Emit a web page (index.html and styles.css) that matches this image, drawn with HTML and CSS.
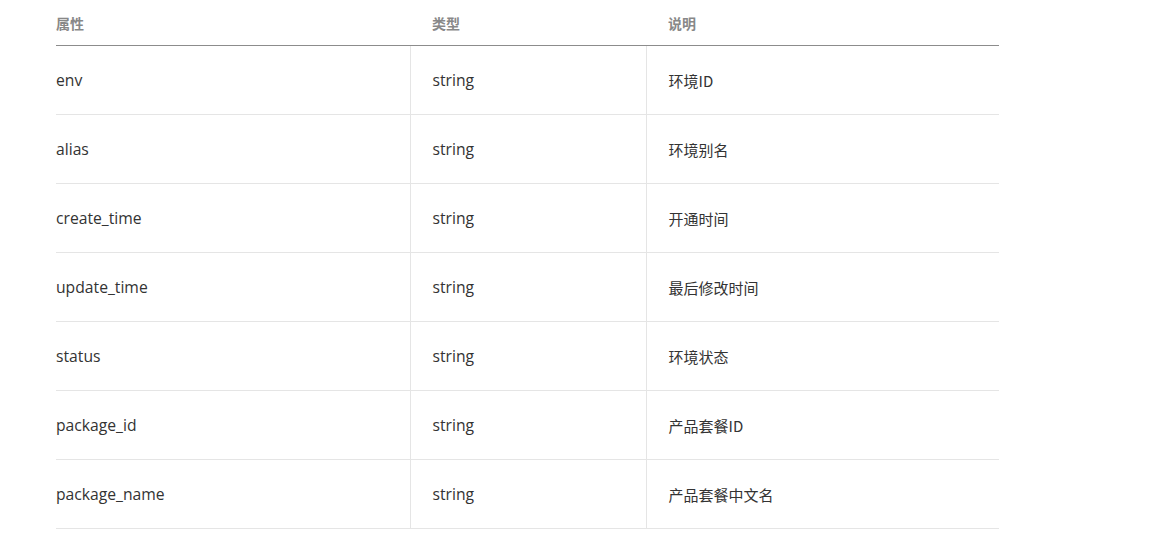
FILE: index.html
```html
<!DOCTYPE html>
<html lang="zh">
<head>
<meta charset="utf-8">
<link rel="stylesheet" href="styles.css">
</head>
<body>
<div class="wrap">
<table class="props">
  <thead>
    <tr><th class="c1">属性</th><th class="c2">类型</th><th class="c3">说明</th></tr>
  </thead>
  <tbody>
    <tr><td class="c1">env</td><td class="c2">string</td><td class="c3">环境ID</td></tr>
    <tr><td class="c1">alias</td><td class="c2">string</td><td class="c3">环境别名</td></tr>
    <tr><td class="c1">create_time</td><td class="c2">string</td><td class="c3">开通时间</td></tr>
    <tr><td class="c1">update_time</td><td class="c2">string</td><td class="c3">最后修改时间</td></tr>
    <tr><td class="c1">status</td><td class="c2">string</td><td class="c3">环境状态</td></tr>
    <tr><td class="c1">package_id</td><td class="c2">string</td><td class="c3">产品套餐ID</td></tr>
    <tr><td class="c1">package_name</td><td class="c2">string</td><td class="c3">产品套餐中文名</td></tr>
  </tbody>
</table>
</div>
</body>
</html>
```
FILE: styles.css
```css
html, body {
  margin: 0;
  padding: 0;
  background: #fff;
}
.wrap {
  padding-left: 56px;
}
.props {
  width: 943px;
  border-collapse: collapse;
  table-layout: fixed;
  font-family: "Open Sans", "Noto Sans CJK SC", sans-serif;
  color: #333;
}
.props th {
  height: 45px;
  padding: 0 0 0 22px;
  text-align: left;
  font-size: 14px;
  font-weight: bold;
  color: #888;
  border-bottom: 1px solid #8c8c8c;
  vertical-align: middle;
  font-family: "Noto Sans CJK SC", sans-serif;
}
.props td {
  height: 68px;
  padding: 0 0 0 22px;
  font-size: 15.7px;
  border-bottom: 1px solid #e5e5e5;
  vertical-align: middle;
}
.props th.c1, .props td.c1 {
  width: 354px;
  padding-left: 0;
}
.props .c2 {
  width: 214px;
}
.props td.c2, .props td.c3 {
  border-left: 1px solid #e5e5e5;
}
.props td.c3 {
  font-family: "Noto Sans CJK SC", sans-serif;
  font-size: 15px;
}
```
